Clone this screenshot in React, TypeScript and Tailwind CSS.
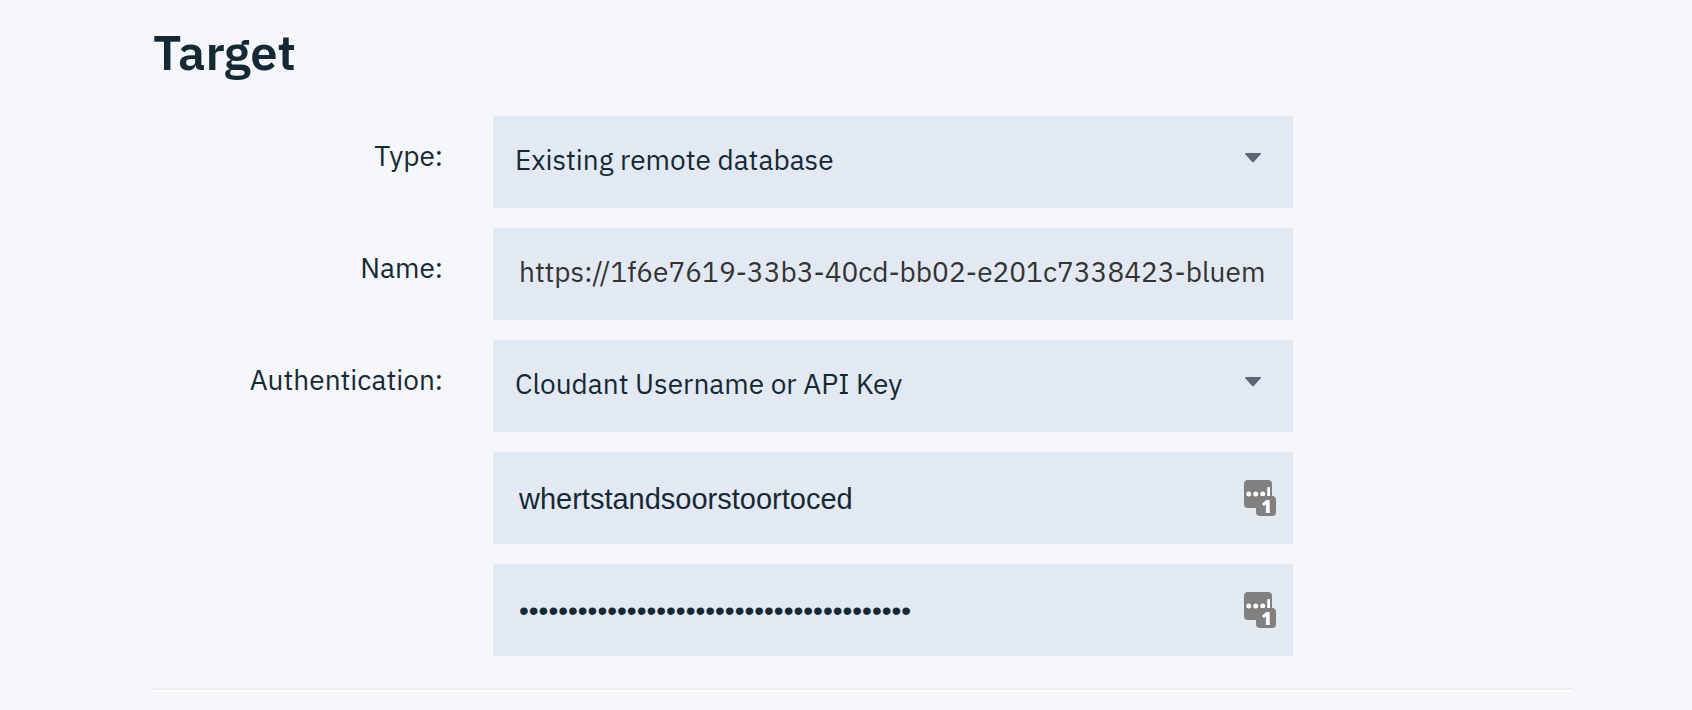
import { useState } from "react";
import type { ReactNode } from "react";

const sans = "font-['IBM_Plex_Sans','Noto_Sans',sans-serif]";
const fieldBox =
  "relative flex h-[92px] w-full max-w-[800px] items-center bg-[#e2e9f3]";

function Row({ id, label, children }: { id?: string; label?: string; children: ReactNode }) {
  return (
    <div className="grid grid-cols-[290px_minmax(0,1fr)] gap-x-[50px]">
      {label ? (
        <label htmlFor={id} className="pt-5 text-right text-[28px] leading-10">
          {label}
        </label>
      ) : (
        <span />
      )}
      {children}
    </div>
  );
}

function SelectField({ id, options }: { id: string; options: string[] }) {
  return (
    <div className={fieldBox}>
      <select
        id={id}
        className="h-full w-full appearance-none bg-transparent pr-16 pb-1 pl-[22px] text-[28px] outline-none"
      >
        {options.map((option) => (
          <option key={option}>{option}</option>
        ))}
      </select>
      <svg
        className="pointer-events-none absolute top-[37px] right-8 h-[10px] w-4"
        viewBox="0 0 16 10"
        aria-hidden="true"
      >
        <path d="M.8 0h14.400q1.200.2.500 1.200L9 8.800q-1 1-2 0L.3 1.200Q-.4.200.8 0z" fill="#5a6872" />
      </svg>
    </div>
  );
}

function FillButton({ label }: { label: string }) {
  return (
    <button type="button" aria-label={label} className="mr-[17px] shrink-0">
      <svg className="block h-9 w-8 overflow-visible" viewBox="0 0 32 36" aria-hidden="true">
        <rect width="28" height="28" rx="4" fill="#808080" />
        <circle cx="4.700" cy="14" r="2.500" fill="#fff" />
        <circle cx="11.700" cy="14" r="2.500" fill="#fff" />
        <circle cx="18.700" cy="14" r="2.500" fill="#fff" />
        <rect x="23.200" y="7" width="2.800" height="12" rx="1" fill="#fff" />
        <rect x="12" y="16" width="20" height="20" rx="4" fill="#808080" />
        <text
          x="22.500"
          y="33"
          textAnchor="middle"
          fontFamily="Open Sans, Noto Sans, sans-serif"
          fontWeight="800"
          fontSize="18"
          fill="#fff"
        >
          1
        </text>
      </svg>
    </button>
  );
}

export default function App() {
  const [name, setName] = useState("https://1f6e7619-33b3-40cd-bb02-e201c7338423-bluem");
  const [user, setUser] = useState("whertstandsoorstoortoced");
  const [password, setPassword] = useState("x".repeat(40));
  const credential =
    "h-full min-w-0 flex-1 bg-transparent pt-0.5 pl-[26px] font-['Liberation_Sans',Arial,sans-serif] outline-none";

  return (
    <main className={`min-h-screen bg-[#f5f7fb] pr-[119px] pl-[153px] text-[#152935] ${sans}`}>
      <form className="border-b-2 border-[#eeeeee] pb-8">
        <h1 className="pt-5 text-[49px] leading-[64px] font-semibold">Target</h1>
        <div className="flex flex-col gap-5 pt-8">
          <Row id="type" label="Type:">
            <SelectField id="type" options={["Existing remote database"]} />
          </Row>
          <Row id="name" label="Name:">
            <div className={fieldBox}>
              <input
                id="name"
                type="text"
                value={name}
                onChange={(e) => setName(e.target.value)}
                className="h-full w-full bg-transparent pr-5 pb-1.5 pl-[26px] text-[28px] text-[#333333] outline-none"
              />
            </div>
          </Row>
          <Row id="auth" label="Authentication:">
            <SelectField id="auth" options={["Cloudant Username or API Key"]} />
          </Row>
          <Row>
            <div className={fieldBox}>
              <input
                type="text"
                aria-label="Username"
                value={user}
                onChange={(e) => setUser(e.target.value)}
                className={`${credential} text-[29px]`}
              />
              <FillButton label="Fill username" />
            </div>
          </Row>
          <Row>
            <div className={fieldBox}>
              <input
                type="password"
                aria-label="Password"
                value={password}
                onChange={(e) => setPassword(e.target.value)}
                className={`${credential} text-[28px]`}
              />
              <FillButton label="Fill password" />
            </div>
          </Row>
        </div>
      </form>
      <div className="h-0.5 bg-white" />
    </main>
  );
}
